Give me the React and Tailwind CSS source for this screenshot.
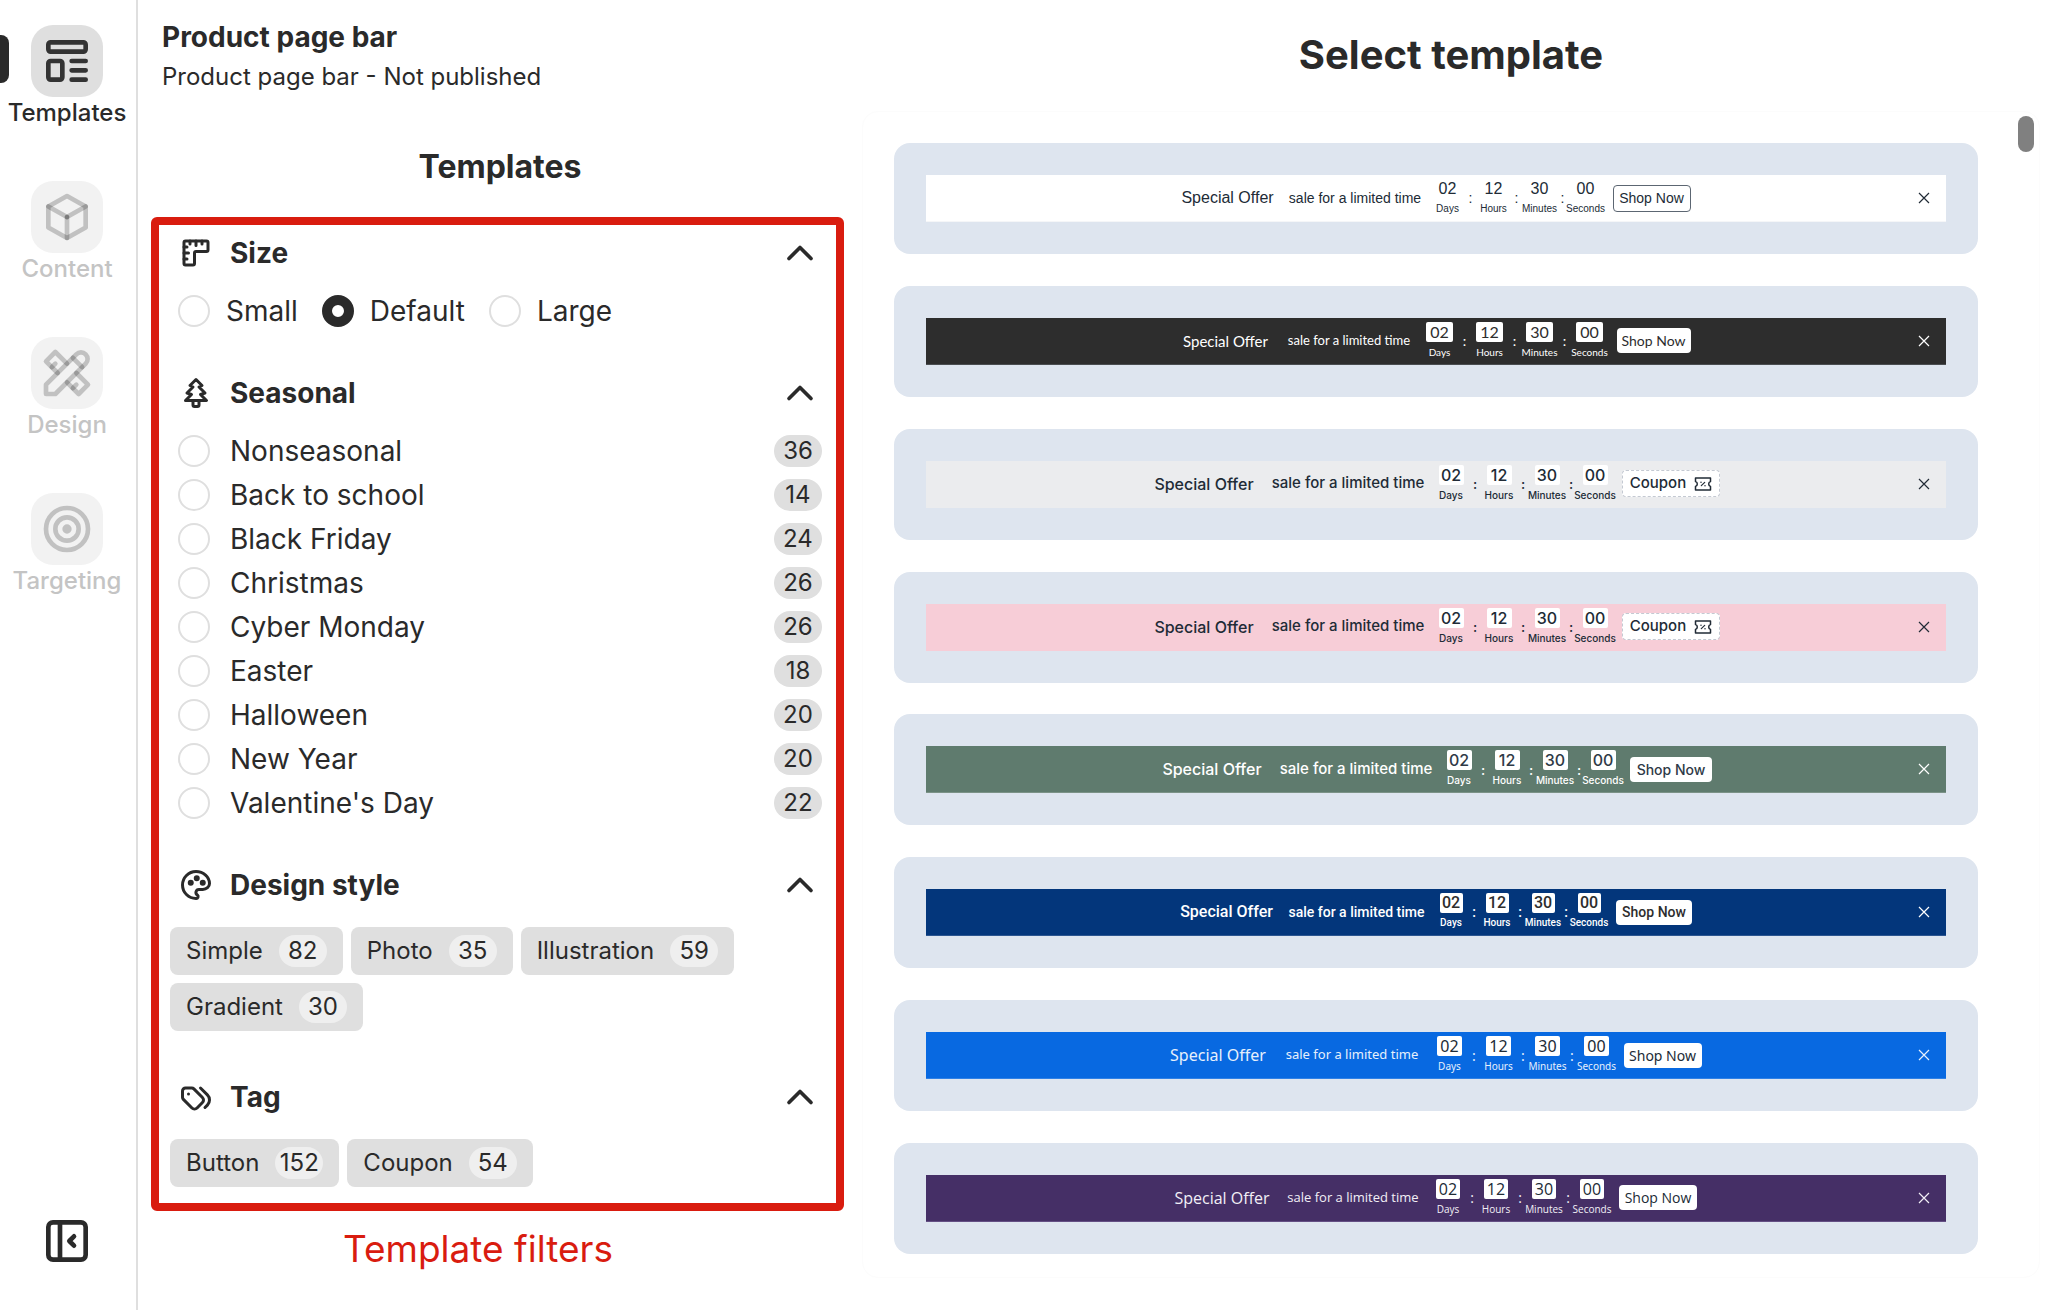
import { useState } from 'react';
import clsx from 'clsx';

const navItems = [
  { id: 'templates', label: 'Templates', icon: TemplateIcon },
  { id: 'content', label: 'Content', icon: BoxIcon },
  { id: 'design', label: 'Design', icon: ToolsIcon },
  { id: 'targeting', label: 'Targeting', icon: TargetIcon },
];

const sizes = ['Small', 'Default', 'Large'];

const seasons = [
  { name: 'Nonseasonal', count: 36 },
  { name: 'Back to school', count: 14 },
  { name: 'Black Friday', count: 24 },
  { name: 'Christmas', count: 26 },
  { name: 'Cyber Monday', count: 26 },
  { name: 'Easter', count: 18 },
  { name: 'Halloween', count: 20 },
  { name: 'New Year', count: 20 },
  { name: "Valentine's Day", count: 22 },
];

const designStyles = [
  { name: 'Simple', count: 82 },
  { name: 'Photo', count: 35 },
  { name: 'Illustration', count: 59 },
  { name: 'Gradient', count: 30 },
];

const tags = [
  { name: 'Button', count: 152 },
  { name: 'Coupon', count: 54 },
];

const countdown = [
  { value: '02', unit: 'Days' },
  { value: '12', unit: 'Hours' },
  { value: '30', unit: 'Minutes' },
  { value: '00', unit: 'Seconds' },
];

const templates = [
  {
    id: 'plain',
    bar: 'bg-white border-[#f5f6f8] text-[#212b36] font-["Liberation_Sans",sans-serif]',
    title: 'w-[92px] text-[16px]',
    text: 'w-[131px] text-[14px]',
    colon: 'w-2',
    button: 'w-[78px] h-[27px] border border-[#5c6672] text-[14px]',
  },
  {
    id: 'dark',
    bar: 'bg-[#2d2d2d] border-[#4a4d50] text-white font-[Lato,sans-serif]',
    title: 'w-[88px] text-[15px]',
    text: 'w-[127px] text-[13px]',
    digits: 'w-[27px] bg-white text-[#2d2d2d]',
    colon: 'w-3',
    button: 'w-[74px] h-[25px] bg-white text-[#2d2d2d] text-[14px]',
  },
  {
    id: 'gray',
    bar: 'bg-[#ebecee] border-[#ebecee] text-[#212b36] font-medium font-[Inter,sans-serif]',
    title: 'w-[104px] text-[16px]',
    text: 'w-[152px] text-[15px]',
    digits: 'w-[25px] bg-white text-[#212b36]',
    colon: 'w-[10px]',
    coupon: true,
  },
  {
    id: 'pink',
    bar: 'bg-[#f7cdd7] border-[#f7cdd7] text-[#212b36] font-medium font-[Inter,sans-serif]',
    title: 'w-[104px] text-[16px]',
    text: 'w-[152px] text-[15px]',
    digits: 'w-[25px] bg-white text-[#212b36]',
    colon: 'w-[10px]',
    coupon: true,
  },
  {
    id: 'green',
    bar: 'bg-[#5f7b6e] border-[#7b9287] text-white font-medium font-[Inter,sans-serif]',
    title: 'w-[104px] text-[16px]',
    text: 'w-[152px] text-[15px]',
    digits: 'w-[25px] bg-white text-[#2f3a47]',
    colon: 'w-[10px]',
    button: 'w-[82px] h-[25px] bg-white text-[#2f3a47] text-[14px]',
  },
  {
    id: 'navy',
    bar: 'bg-[#03367b] border-[#2b5590] text-white font-medium font-[Roboto,sans-serif]',
    title: 'w-[93px] text-[16px]',
    text: 'w-[135px] text-[14px]',
    digits: 'w-[23px] bg-white text-[#2d2d2d]',
    colon: 'w-2',
    button: 'w-[76px] h-[25px] bg-white text-[#2d2d2d] text-[14px]',
  },
  {
    id: 'blue',
    bar: 'bg-[#0869e1] border-[#2f81e6] text-[#e6f0fc] font-["Noto_Sans",sans-serif]',
    title: 'w-[95px] text-[16px]',
    text: 'w-[141px] text-[13px]',
    digits: 'w-[25px] bg-white text-[#212b36]',
    colon: 'w-[11px]',
    button: 'w-[78px] h-[25px] bg-white text-[#212b36] text-[14px]',
  },
  {
    id: 'purple',
    bar: 'bg-[#452f66] border-[#644f84] text-[#f2eff6] font-["Open_Sans",sans-serif]',
    title: 'w-[94px] text-[16px]',
    text: 'w-[136px] text-[13px]',
    digits: 'w-[24px] bg-white text-[#212b36]',
    colon: 'w-[10px]',
    button: 'w-[78px] h-[25px] bg-white text-[#212b36] text-[14px]',
  },
];

function Icon({ className, strokeWidth = 2, children }) {
  return (
    <svg
      viewBox="0 0 24 24"
      fill="none"
      stroke="currentColor"
      strokeWidth={strokeWidth}
      strokeLinecap="round"
      strokeLinejoin="round"
      aria-hidden="true"
      className={className}
    >
      {children}
    </svg>
  );
}

function TemplateIcon({ className }) {
  return (
    <Icon className={className}>
      <rect x="4" y="4" width="16" height="4" rx="1" />
      <rect x="4" y="12" width="6" height="8" rx="1" />
      <path d="M14 12h6M14 16h6M14 20h6" />
    </Icon>
  );
}

function BoxIcon({ className }) {
  return (
    <Icon className={className}>
      <path d="M12 3l8 4.500v9l-8 4.500l-8 -4.500v-9z" />
      <path d="M12 12l8 -4.500" />
      <path d="M12 12v9" />
      <path d="M12 12l-8 -4.500" />
    </Icon>
  );
}

function ToolsIcon({ className }) {
  return (
    <Icon className={className}>
      <path d="M3 21h4l13 -13a2.828 2.828 0 1 0 -4 -4l-13 13v4" />
      <path d="M14.500 5.500l4 4" />
      <path d="M12 8l-5 -5l-4 4l5 5" />
      <path d="M7 8l-1.500 1.500" />
      <path d="M16 12l5 5l-4 4l-5 -5" />
      <path d="M16 17l-1.500 1.500" />
    </Icon>
  );
}

function TargetIcon({ className }) {
  return (
    <Icon className={className}>
      <circle cx="12" cy="12" r="1" />
      <circle cx="12" cy="12" r="5" />
      <circle cx="12" cy="12" r="9" />
    </Icon>
  );
}

function RulerIcon({ className }) {
  return (
    <Icon className={className}>
      <path d="M5 4h14a1 1 0 0 1 1 1v5a1 1 0 0 1 -1 1h-7a1 1 0 0 0 -1 1v7a1 1 0 0 1 -1 1h-5a1 1 0 0 1 -1 -1v-14a1 1 0 0 1 1 -1" />
      <path d="M4 8h2M4 12h3M4 16h2M8 4v2M12 4v3M16 4v2" />
    </Icon>
  );
}

function TreeIcon({ className }) {
  return (
    <Icon className={className}>
      <path d="M12 3l4 4l-2 1l4 4l-3 1l4 4h-14l4 -4l-3 -1l4 -4l-2 -1z" />
      <path d="M14 17v3a1 1 0 0 1 -1 1h-2a1 1 0 0 1 -1 -1v-3" />
    </Icon>
  );
}

function PaletteIcon({ className }) {
  return (
    <Icon className={className}>
      <path d="M12 21a9 9 0 0 1 0 -18c4.970 0 9 3.582 9 8c0 1.060 -.474 2.078 -1.318 2.828c-.844 .750 -1.989 1.172 -3.182 1.172h-2.500a2 2 0 0 0 -1 3.750a1.300 1.300 0 0 1 -1 2.250" />
      <circle cx="8.500" cy="10.500" r="1" />
      <circle cx="12.500" cy="7.500" r="1" />
      <circle cx="16.500" cy="10.500" r="1" />
    </Icon>
  );
}

function TagsIcon({ className }) {
  return (
    <Icon className={className}>
      <path d="M3 8v4.172a2 2 0 0 0 .586 1.414l5.710 5.710a2.410 2.410 0 0 0 3.408 0l3.592 -3.592a2.410 2.410 0 0 0 0 -3.408l-5.710 -5.710a2 2 0 0 0 -1.414 -.586h-4.172a2 2 0 0 0 -2 2" />
      <path d="M18 19l1.592 -1.592a4.820 4.820 0 0 0 0 -6.816l-4.592 -4.592" />
      <path d="M7 10h-.010" />
    </Icon>
  );
}

function CouponIcon({ className }) {
  return (
    <svg
      viewBox="0 0 18 14"
      fill="none"
      stroke="currentColor"
      strokeWidth="1.500"
      strokeLinecap="round"
      strokeLinejoin="round"
      aria-hidden="true"
      className={className}
    >
      <path d="M1.500 1h15v3.600a2.500 2.500 0 0 0 0 4.800v3.600h-15v-3.600a2.500 2.500 0 0 0 0 -4.800z" />
      <path d="M7.300 8.700l3.400 -3.400" strokeWidth="1.200" />
      <path d="M7 5.200h.010M11 8.800h.010" />
    </svg>
  );
}

function NavItem({ item, active, onClick }) {
  return (
    <button
      type="button"
      onClick={onClick}
      className={clsx(
        'relative flex w-full flex-col items-center text-[24px] leading-[32px] font-medium',
        !active && 'text-[#c4c4c4]'
      )}
    >
      {active && <span className="absolute left-0 top-[10px] h-12 w-[9px] rounded-r-lg bg-[#2a2a2a]" />}
      <span
        className={clsx(
          'flex size-[72px] items-center justify-center rounded-[22px]',
          active ? 'bg-[#dfdfdf] text-[#333]' : 'bg-[#f2f2f2] text-black/20'
        )}
      >
        <item.icon className="size-14" />
      </span>
      {item.label}
    </button>
  );
}

function FilterSection({ title, icon: SectionIcon, children }) {
  const [open, setOpen] = useState(true);

  return (
    <section>
      <h3>
        <button
          type="button"
          aria-expanded={open}
          onClick={() => setOpen(!open)}
          className="flex h-14 w-full items-center pl-[19px] pr-[14px] text-[28px] font-bold"
        >
          <SectionIcon className="mr-4 size-9" />
          {title}
          <Icon className={clsx('ml-auto size-11', !open && 'rotate-180')}>
            <path d="M6 15l6 -6l6 6" />
          </Icon>
        </button>
      </h3>
      {open && <div className="mt-[14px]">{children}</div>}
    </section>
  );
}

function Radio(props) {
  return (
    <input
      type="radio"
      className="size-8 shrink-0 appearance-none rounded-full border-2 border-[#dfdfdf] bg-white checked:border-[10px] checked:border-[#2a2a2a]"
      {...props}
    />
  );
}

function Chips({ items }) {
  return (
    <div className="flex flex-wrap gap-2 pl-[11px]">
      {items.map((item) => (
        <button
          key={item.name}
          type="button"
          className="flex h-12 items-center gap-4 rounded-lg bg-[#dfdfdf] px-4 text-[24px]"
        >
          {item.name}
          <span className="flex h-8 w-12 items-center justify-center rounded-full bg-[#efefef]">{item.count}</span>
        </button>
      ))}
    </div>
  );
}

function TemplateCard({ template }) {
  return (
    <li className="rounded-2xl bg-[#dee5ef] p-8">
      <div
        className={clsx(
          'grid h-[47px] grid-cols-[1fr_auto_1fr] items-center whitespace-nowrap border-b',
          template.bar
        )}
      >
        <div className="col-start-2 flex items-center gap-2">
          <span className={clsx('mr-2 flex justify-center', template.title)}>Special Offer</span>
          <span className={clsx('flex justify-center', template.text)}>sale for a limited time</span>
          <div className="flex items-center">
            {countdown.map((part, i) => (
              <div key={part.unit} className="flex items-center">
                {i > 0 && <span className={clsx('flex justify-center text-[14px]', template.colon)}>:</span>}
                <span className="flex w-[38px] flex-col items-center gap-[2px]">
                  <span className={clsx('rounded-[2px] text-center text-[16px] leading-[20px]', template.digits)}>
                    {part.value}
                  </span>
                  <span className="text-[10px] leading-[16px]">{part.unit}</span>
                </span>
              </div>
            ))}
          </div>
          {template.coupon ? (
            <button
              type="button"
              className="flex h-[27px] w-[98px] items-center justify-center gap-2 rounded-sm border border-dashed border-[#c4c9d2] bg-white text-[15px]"
            >
              Coupon
              <CouponIcon className="h-[14px] w-[18px]" />
            </button>
          ) : (
            <button type="button" className={clsx('rounded-sm', template.button)}>
              Shop Now
            </button>
          )}
        </div>
        <button type="button" aria-label="Close" className="mr-4 justify-self-end">
          <svg viewBox="0 0 12 12" stroke="currentColor" strokeWidth="1.200" className="size-3">
            <path d="M1 1l10 10M11 1l-10 10" />
          </svg>
        </button>
      </div>
    </li>
  );
}

export default function App() {
  const [activeNav, setActiveNav] = useState('templates');
  const [size, setSize] = useState('Default');
  const [season, setSeason] = useState('');

  return (
    <div className="flex min-h-screen bg-white font-[Inter,sans-serif] text-[#2a2a2a]">
      {/* Sidebar */}
      <aside className="flex w-[138px] shrink-0 flex-col justify-between border-r-2 border-[#dfdfdf] pt-[25px] pb-[41px]">
        <nav className="flex flex-col gap-[52px] pr-[2px]">
          {navItems.map((item) => (
            <NavItem
              key={item.id}
              item={item}
              active={activeNav === item.id}
              onClick={() => setActiveNav(item.id)}
            />
          ))}
        </nav>
        <button type="button" aria-label="Collapse sidebar" className="mr-[2px] self-center">
          <Icon className="size-14">
            <rect x="4" y="4" width="16" height="16" rx="2" />
            <path d="M9 4v16" />
            <path d="M15 10l-2 2l2 2" />
          </Icon>
        </button>
      </aside>

      {/* Filters */}
      <div className="w-[724px] shrink-0">
        <header className="px-6 pt-[17px]">
          <h1 className="text-[28px] leading-[40px] font-bold">Product page bar</h1>
          <p className="text-[24px] leading-[40px]">Product page bar - Not published</p>
        </header>

        <h2 className="mt-[50px] text-center text-[32px] leading-[40px] font-bold">Templates</h2>

        <div className="mt-[30px] mr-[18px] ml-[13px] flex flex-col gap-[38px] rounded-md border-8 border-[#d91c0f] pb-4">
          <FilterSection title="Size" icon={RulerIcon}>
            <div className="flex gap-6 pl-[19px] text-[28px] leading-8">
              {sizes.map((name) => (
                <label key={name} className="flex items-center gap-4">
                  <Radio name="size" checked={size === name} onChange={() => setSize(name)} />
                  {name}
                </label>
              ))}
            </div>
          </FilterSection>

          <FilterSection title="Seasonal" icon={TreeIcon}>
            <div className="flex flex-col gap-3 pl-[19px] pr-[14px] text-[28px] leading-8">
              {seasons.map((item) => (
                <label key={item.name} className="flex items-center">
                  <Radio name="season" checked={season === item.name} onChange={() => setSeason(item.name)} />
                  <span className="ml-5">{item.name}</span>
                  <span className="ml-auto flex h-8 w-12 items-center justify-center rounded-full bg-[#dfdfdf] text-[24px]">
                    {item.count}
                  </span>
                </label>
              ))}
            </div>
          </FilterSection>

          <FilterSection title="Design style" icon={PaletteIcon}>
            <Chips items={designStyles} />
          </FilterSection>

          <FilterSection title="Tag" icon={TagsIcon}>
            <Chips items={tags} />
          </FilterSection>
        </div>

        <p className="mt-[14px] pr-11 text-center text-[37px] leading-[48px] text-[#d91c0f]">Template filters</p>
      </div>

      {/* Template list */}
      <main className="mr-[30px] flex min-w-0 flex-1 flex-col pb-8">
        <h2 className="pt-[31px] pb-8 text-center text-[40px] leading-[48px] font-bold">Select template</h2>
        <div className="relative flex flex-1 flex-col rounded-2xl border border-[#fcfcfc] pt-[31px] pr-[61px] pb-[23px] pl-[31px]">
          <ul className="flex flex-1 flex-col justify-between gap-[31px]">
            {templates.map((template) => (
              <TemplateCard key={template.id} template={template} />
            ))}
          </ul>
          <span className="absolute top-1 right-[5px] h-9 w-4 rounded-full bg-[#808080]" />
        </div>
      </main>
    </div>
  );
}
